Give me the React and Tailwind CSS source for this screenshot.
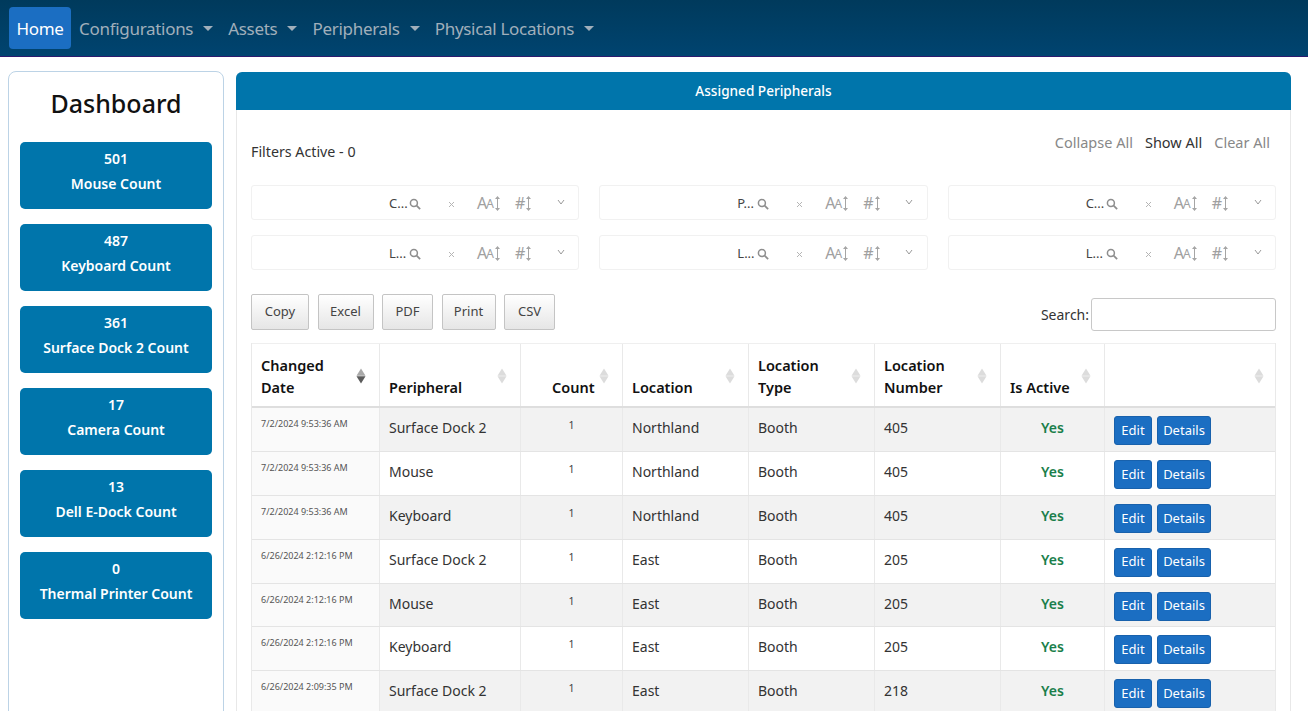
import React from 'react'

const navItems = ['Configurations', 'Assets', 'Peripherals', 'Physical Locations']
const counts = [
  ['501', 'Mouse Count'],
  ['487', 'Keyboard Count'],
  ['361', 'Surface Dock 2 Count'],
  ['17', 'Camera Count'],
  ['13', 'Dell E-Dock Count'],
  ['0', 'Thermal Printer Count'],
]
const filters = ['C...', 'P...', 'C...', 'L...', 'L...', 'L...']
const exportButtons = [
  ['Copy', 'w-[58px]'],
  ['Excel', 'w-[56px]'],
  ['PDF', 'w-[51px]'],
  ['Print', 'w-[54px]'],
  ['CSV', 'w-[51px]'],
]
const columns = 'grid grid-cols-[128px_141px_102px_126px_126px_126px_104px_172px]'
const rows = [
  ['7/2/2024 9:53:36 AM', 'Surface Dock 2', 'Northland', '405'],
  ['7/2/2024 9:53:36 AM', 'Mouse', 'Northland', '405'],
  ['7/2/2024 9:53:36 AM', 'Keyboard', 'Northland', '405'],
  ['6/26/2024 2:12:16 PM', 'Surface Dock 2', 'East', '205'],
  ['6/26/2024 2:12:16 PM', 'Mouse', 'East', '205'],
  ['6/26/2024 2:12:16 PM', 'Keyboard', 'East', '205'],
  ['6/26/2024 2:09:35 PM', 'Surface Dock 2', 'East', '218'],
]

function SortDiamond({ active }) {
  return (
    <svg width="10" height="16" viewBox="0 0 10 16" className="absolute right-[13px] top-[24px]">
      <path d="M5 0.5 L9.5 7.8 L0.5 7.8 Z" fill={active ? '#a9a9a9' : '#dcdcdc'} />
      <path d="M5 15.5 L9.5 8.2 L0.5 8.2 Z" fill={active ? '#5c5c5c' : '#dcdcdc'} />
    </svg>
  )
}

function UpDown() {
  return (
    <svg width="7" height="17" viewBox="0 0 7 17" className="shrink-0">
      <path d="M3.5 2 V15" stroke="#a5a5a5" strokeWidth="1" />
      <path d="M1 4 L3.5 1 L6 4 Z M1 13 L3.5 16 L6 13 Z" fill="#a5a5a5" />
    </svg>
  )
}

function FilterBox({ label }) {
  return (
    <div className="h-[35px] rounded-[3px] border border-[#f1f1f1] relative flex items-center text-[#a0a0a0]">
      <span className="absolute left-[137px] top-[8px] text-[13px] leading-[18px] text-[#444]">{label}</span>
      <svg width="12" height="12" viewBox="0 0 11 11" className="absolute left-[157px] top-[12px]">
        <circle cx="4.5" cy="4.5" r="3.2" fill="none" stroke="#8e8e8e" strokeWidth="1.4" />
        <path d="M7 7 L10.2 10.2" stroke="#8e8e8e" strokeWidth="1.6" />
      </svg>
      <svg width="7" height="7" viewBox="0 0 7 7" className="absolute left-[196px] top-[15px]">
        <path d="M1 1 L6 6 M6 1 L1 6" stroke="#b5b5b5" strokeWidth="1" />
      </svg>
      <span className="absolute left-[225px] top-[7px] flex items-center">
        <span className="text-[16px] leading-[18px]">A</span>
        <span className="text-[12px] leading-[18px] mt-[2px] -ml-[1px]">A</span>
        <UpDown />
      </span>
      <span className="absolute left-[263px] top-[8px] flex items-center">
        <span className="text-[16px] leading-[18px]">#</span>
        <UpDown />
      </span>
      <svg width="8" height="6" viewBox="0 0 8 6" className="absolute left-[305px] top-[13px]">
        <path d="M1 1 L4 5 L7 1" fill="none" stroke="#9a9a9a" strokeWidth="1" />
      </svg>
    </div>
  )
}

function HeadCell({ lines, active, className }) {
  return (
    <div className={`relative border-r border-[#e9e9e9] px-[9px] pb-[8px] flex flex-col justify-end text-[14.5px] leading-[22px] font-semibold text-[#111] ${className || ''}`}>
      {lines.map(l => <div key={l}>{l}</div>)}
      <SortDiamond active={active} />
    </div>
  )
}

export default function App() {
  return (
    <div className="h-screen overflow-hidden bg-white font-['Noto_Sans','Open_Sans',sans-serif] text-[#333]">
      <nav className="h-[57px] border-b border-[#2d1a6e] bg-gradient-to-b from-[#003a5c] to-[#004470] flex items-center pl-[9px] text-[17px] tracking-[-0.3px]">
        <a className="h-[42px] w-[62px] pt-px rounded-[4px] bg-[#1b6ec2] text-white flex items-center justify-center">Home</a>
        {navItems.map(item => (
          <a key={item} className="flex items-center pt-px text-[#a1afbb] pl-[8px] pr-[7px]">
            {item}
            <span className="ml-[10px] w-0 h-0 border-x-[5px] border-x-transparent border-t-[5px] border-t-[#a1afbb]" />
          </a>
        ))}
      </nav>

      <div className="flex items-start pl-[8px] pt-[14px] gap-[12px]">
        <aside className="w-[216px] h-[700px] shrink-0 rounded-[8px] border border-[#bcd3e6] px-[11px]">
          <h1 className="text-[25px] leading-[36px] font-medium text-[#111] text-center mt-[13px] mb-[21px]">Dashboard</h1>
          <div className="flex flex-col gap-[15.2px]">
            {counts.map(([n, label]) => (
              <div key={label} className="h-[66.8px] rounded-[5px] bg-[#0075ab] text-white text-center font-semibold text-[14px] pt-[6px]">
                <div className="leading-[22px]">{n}</div>
                <div className="leading-[22px] mt-[3px]">{label}</div>
              </div>
            ))}
          </div>
        </aside>

        <main className="w-[1055px] mt-px shrink-0 rounded-t-[6px] border-x border-[#e8e8e8]">
          <div className="h-[38px] -mx-px rounded-t-[6px] bg-[#0075ab] text-white text-[13.6px] font-medium flex items-center justify-center">
            Assigned Peripherals
          </div>
          <div className="pl-[14px] pr-[14px]">
            <div className="flex justify-between h-[75px]">
              <div className="pt-[32px] text-[14.25px] leading-[20px] text-[#333]">Filters Active - 0</div>
              <div className="pt-[22px] pr-[6px] flex gap-[12px] text-[14.5px] leading-[20px] text-[#888]">
                <span>Collapse All</span>
                <span className="text-[#333]">Show All</span>
                <span>Clear All</span>
              </div>
            </div>
            <div className="grid grid-cols-3 gap-x-[20px] gap-y-[15px]">
              {filters.map((f, i) => <FilterBox key={i} label={f} />)}
            </div>

            <div className="flex justify-between items-center mt-[24px] h-[36px]">
              <div className="flex gap-[8.5px]">
                {exportButtons.map(([b, w]) => (
                  <button key={b} className={`${w} h-[36px] rounded-[2px] border border-[#c4c4c4] bg-gradient-to-b from-white to-[#e6e6e6] text-[13px] text-[#444]`}>{b}</button>
                ))}
              </div>
              <div className="flex items-center gap-[2px] text-[14px] text-[#333] mt-[4px]">
                <span>Search:</span>
                <input className="w-[185px] h-[33px] rounded-[3px] border border-[#c8c8c8] bg-white" />
              </div>
            </div>

            <div className="mt-[13px] w-[1025px] border-x border-[#e9e9e9]">
              <div className={`${columns} h-[65px] border-t border-b-2 border-t-[#efefef] border-b-[#dedede]`}>
                <HeadCell lines={['Changed', 'Date']} active />
                <HeadCell lines={['Peripheral']} />
                <HeadCell lines={['Count']} className="pl-[31px]" />
                <HeadCell lines={['Location']} />
                <HeadCell lines={['Location', 'Type']} />
                <HeadCell lines={['Location', 'Number']} />
                <HeadCell lines={['Is Active']} />
                <HeadCell lines={[]} className="border-r-0" />
              </div>
              {rows.map((r, i) => (
                <div key={i} className={`${columns} h-[43.9px] border-b border-[#e4e4e4] text-[14px] text-[#333] ${i % 2 === 0 ? 'bg-[#f2f2f2]' : 'bg-white'}`}>
                  <div className="bg-[#fafafa] border-r border-[#e9e9e9] pl-[9px] pt-[9px] text-[9px] leading-[14px] text-[#555]">{r[0]}</div>
                  <div className="border-r border-[#e9e9e9] pl-[9px] pt-[9px] leading-[22px]">{r[1]}</div>
                  <div className="border-r border-[#e9e9e9] text-center pt-[7px] text-[10.5px] leading-[20px] text-[#444]">1</div>
                  <div className="border-r border-[#e9e9e9] pl-[9px] pt-[9px] leading-[22px]">{r[2]}</div>
                  <div className="border-r border-[#e9e9e9] pl-[9px] pt-[9px] leading-[22px]">Booth</div>
                  <div className="border-r border-[#e9e9e9] pl-[9px] pt-[9px] leading-[22px]">{r[3]}</div>
                  <div className="border-r border-[#e9e9e9] text-center pt-[9px] leading-[22px] font-semibold text-[#1a7f4b]">Yes</div>
                  <div className="pl-[9px] pt-[8px] flex gap-[5px] items-start">
                    <button className="w-[38px] h-[29px] rounded-[3px] bg-[#1b6ec2] border border-[#1861ac] text-white text-[13px]">Edit</button>
                    <button className="w-[54px] h-[29px] rounded-[3px] bg-[#1b6ec2] border border-[#1861ac] text-white text-[13px]">Details</button>
                  </div>
                </div>
              ))}
            </div>
          </div>
        </main>
      </div>
    </div>
  )
}
